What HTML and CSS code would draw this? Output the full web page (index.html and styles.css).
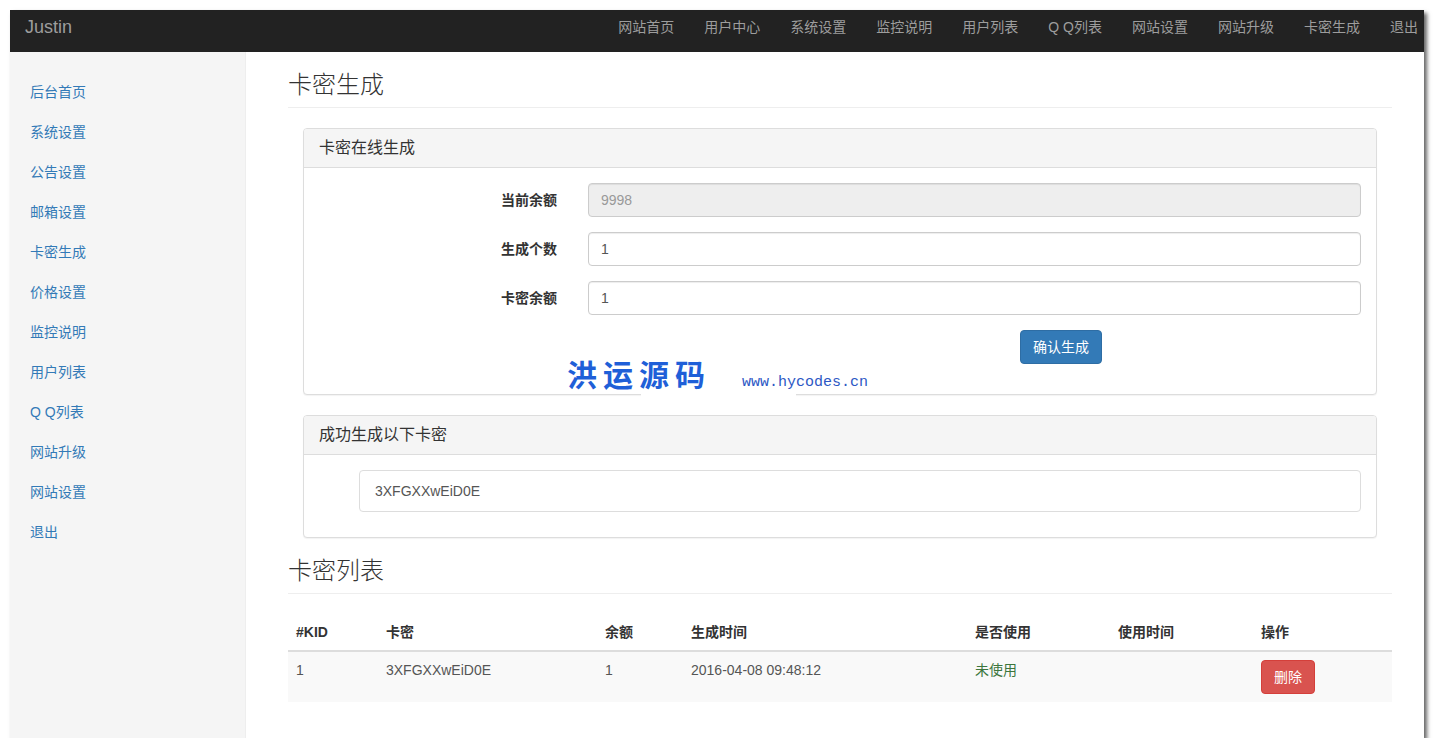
FILE: index.html
```html
<!DOCTYPE html>
<html lang="zh-CN">
<head>
<meta charset="utf-8">
<title>卡密生成</title>
<link rel="stylesheet" href="styles.css">
</head>
<body>
<div class="window">
  <nav class="navbar">
    <a class="brand" href="#">Justin</a>
    <ul class="nav-top">
      <li><a href="#">网站首页</a></li>
      <li><a href="#">用户中心</a></li>
      <li><a href="#">系统设置</a></li>
      <li><a href="#">监控说明</a></li>
      <li><a href="#">用户列表</a></li>
      <li><a href="#">Q Q列表</a></li>
      <li><a href="#">网站设置</a></li>
      <li><a href="#">网站升级</a></li>
      <li><a href="#">卡密生成</a></li>
      <li><a href="#">退出</a></li>
    </ul>
  </nav>
  <div class="layout">
    <aside class="sidebar">
      <ul class="side-nav">
        <li><a href="#">后台首页</a></li>
        <li><a href="#">系统设置</a></li>
        <li><a href="#">公告设置</a></li>
        <li><a href="#">邮箱设置</a></li>
        <li><a href="#">卡密生成</a></li>
        <li><a href="#">价格设置</a></li>
        <li><a href="#">监控说明</a></li>
        <li><a href="#">用户列表</a></li>
        <li><a href="#">Q Q列表</a></li>
        <li><a href="#">网站升级</a></li>
        <li><a href="#">网站设置</a></li>
        <li><a href="#">退出</a></li>
      </ul>
    </aside>
    <main class="main">
      <h1 class="page-header">卡密生成</h1>
      <div class="panels">
        <section class="panel panel-gen">
          <div class="panel-heading">卡密在线生成</div>
          <form class="panel-body form-horizontal">
            <div class="form-group">
              <label class="control-label">当前余额</label>
              <input class="form-control" type="text" value="9998" disabled>
            </div>
            <div class="form-group">
              <label class="control-label">生成个数</label>
              <input class="form-control" type="text" value="1">
            </div>
            <div class="form-group">
              <label class="control-label">卡密余额</label>
              <input class="form-control" type="text" value="1">
            </div>
            <div class="form-actions">
              <button class="btn btn-primary" type="button">确认生成</button>
            </div>
          </form>
          <div class="watermark">
            <span class="wm-cn">洪运源码</span>
            <span class="wm-url">www.hycodes.cn</span>
          </div>
        </section>
        <section class="panel">
          <div class="panel-heading">成功生成以下卡密</div>
          <div class="panel-body">
            <div class="result-box">3XFGXXwEiD0E</div>
          </div>
        </section>
      </div>
      <h1 class="page-header">卡密列表</h1>
      <table class="table">
        <thead>
          <tr>
            <th class="c-kid">#KID</th>
            <th class="c-card">卡密</th>
            <th class="c-bal">余额</th>
            <th class="c-time">生成时间</th>
            <th class="c-used">是否使用</th>
            <th class="c-utime">使用时间</th>
            <th class="c-op">操作</th>
          </tr>
        </thead>
        <tbody>
          <tr>
            <td>1</td>
            <td>3XFGXXwEiD0E</td>
            <td>1</td>
            <td>2016-04-08 09:48:12</td>
            <td class="unused">未使用</td>
            <td></td>
            <td><button class="btn btn-danger" type="button">删除</button></td>
          </tr>
        </tbody>
      </table>
    </main>
  </div>
</div>
</body>
</html>
```

FILE: styles.css
```css
* { box-sizing: border-box; }

html, body {
  margin: 0;
  padding: 0;
  background: #fff;
}

body {
  font-family: "Liberation Sans", Arial, "Noto Sans CJK SC", sans-serif;
  font-size: 14px;
  line-height: 20px;
  color: #333;
  padding: 10px 0 0 10px;
}

.window {
  width: 1414px;
  height: 728px;
  background: #fff;
  display: flex;
  flex-direction: column;
  overflow: hidden;
  box-shadow: 3px 3px 4px rgba(0, 0, 0, 0.6);
}

a { text-decoration: none; }

/* Top navbar */
.navbar {
  height: 42px;
  flex: none;
  background: #222;
  display: flex;
  align-items: flex-start;
  justify-content: space-between;
  padding-left: 15px;
}

.brand {
  color: #9d9d9d;
  font-size: 18px;
  line-height: 20px;
  padding-top: 7px;
}

.nav-top {
  list-style: none;
  margin: 0 -9px 0 0;
  padding: 0;
  display: flex;
}

.nav-top a {
  display: block;
  color: #9d9d9d;
  padding: 7px 15px;
  white-space: nowrap;
}

/* Layout */
.layout {
  flex: 1;
  display: flex;
  min-height: 0;
}

.sidebar {
  width: 236px;
  flex: none;
  background: #f5f5f5;
  border-right: 1px solid #eee;
  padding-top: 20px;
}

.side-nav {
  list-style: none;
  margin: 0;
  padding: 0;
}

.side-nav a {
  display: block;
  padding: 10px 20px;
  color: #337ab7;
}

.main {
  flex: 1;
  padding: 0 32px 0 42px;
}

.page-header {
  margin: 20px 0 20px;
  padding-bottom: 9px;
  border-bottom: 1px solid #eee;
  font-size: 24px;
  font-weight: 300;
  line-height: 26.4px;
  color: #333;
}

.panels {
  padding: 0 15px;
}

.panel {
  position: relative;
  border: 1px solid #ddd;
  border-radius: 4px;
  background: #fff;
  margin-bottom: 20px;
  box-shadow: 0 1px 1px rgba(0, 0, 0, 0.05);
}

.panel-heading {
  background: #f5f5f5;
  border-bottom: 1px solid #ddd;
  border-radius: 3px 3px 0 0;
  padding: 10px 15px;
  font-size: 16px;
  line-height: 17.6px;
  color: #333;
}

.panel-body {
  padding: 15px;
  margin: 0;
}

.form-group {
  display: grid;
  grid-template-columns: 238px 1fr;
  column-gap: 31px;
  margin-bottom: 15px;
}

.control-label {
  text-align: right;
  font-weight: bold;
  padding-top: 7px;
}

.form-control {
  display: block;
  width: 100%;
  height: 34px;
  padding: 6px 12px;
  font-family: inherit;
  font-size: 14px;
  line-height: 20px;
  color: #555;
  background: #fff;
  border: 1px solid #ccc;
  border-radius: 4px;
  box-shadow: inset 0 1px 1px rgba(0, 0, 0, 0.075);
}

.form-control:disabled {
  background: #eee;
  color: #999;
}

.form-actions {
  padding-left: 701px;
  margin-bottom: 15px;
}

.btn {
  display: inline-block;
  font-family: inherit;
  font-size: 14px;
  line-height: 20px;
  padding: 6px 12px;
  border: 1px solid transparent;
  border-radius: 4px;
  color: #fff;
  cursor: pointer;
}

.btn-primary {
  background: #337ab7;
  border-color: #2e6da4;
}

.btn-danger {
  background: #d9534f;
  border-color: #d43f3a;
}

/* watermark */
.watermark {
  position: absolute;
  left: 263px;
  top: 229px;
  display: flex;
  align-items: baseline;
  gap: 31px;
}

.watermark::after {
  content: "";
  position: absolute;
  left: 74px;
  top: 35px;
  width: 155px;
  height: 4px;
  background: #fff;
}

.wm-cn {
  font-family: "Noto Sans CJK SC", sans-serif;
  font-weight: bold;
  font-size: 30px;
  line-height: 30px;
  letter-spacing: 6px;
  color: #1f5fd8;
}

.wm-url {
  font-family: "Liberation Mono", "Courier New", monospace;
  font-size: 15px;
  color: #2c57c4;
}

.result-box {
  margin: 0 0 10px 40px;
  padding: 10px 15px;
  border: 1px solid #ddd;
  border-radius: 4px;
  color: #555;
}

/* table */
.table {
  width: 100%;
  border-collapse: collapse;
  table-layout: fixed;
}

.table th,
.table td {
  padding: 8px;
  text-align: left;
  vertical-align: top;
  line-height: 20px;
}

.table th {
  font-weight: bold;
  border-bottom: 2px solid #ddd;
}

.table tbody tr {
  background: #f9f9f9;
}

.table td {
  border-top: 1px solid #ddd;
  color: #555;
}

.c-kid { width: 90px; }
.c-card { width: 219px; }
.c-bal { width: 86px; }
.c-time { width: 284px; }
.c-used { width: 143px; }
.c-utime { width: 143px; }

.table td.unused { color: #3c763d; }
```
